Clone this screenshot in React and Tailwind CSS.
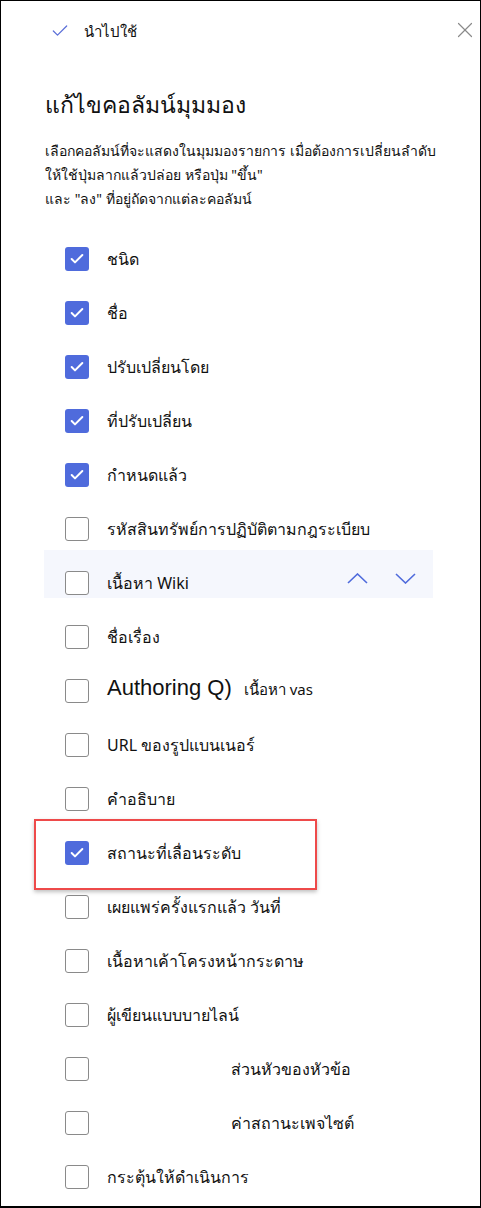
import { Check, X } from "lucide-react";

const columns = [
  { label: "ชนิด", checked: true },
  { label: "ชื่อ", checked: true },
  { label: "ปรับเปลี่ยนโดย", checked: true },
  { label: "ที่ปรับเปลี่ยน", checked: true },
  { label: "กำหนดแล้ว", checked: true },
  { label: "รหัสสินทรัพย์การปฏิบัติตามกฎระเบียบ" },
  { label: "เนื้อหา Wiki", active: true },
  { label: "ชื่อเรื่อง" },
  { label: "authoring" },
  { label: "URL ของรูปแบนเนอร์" },
  { label: "คำอธิบาย" },
  { label: "สถานะที่เลื่อนระดับ", checked: true, marked: true },
  { label: "เผยแพร่ครั้งแรกแล้ว  วันที่" },
  { label: "เนื้อหาเค้าโครงหน้ากระดาษ" },
  { label: "ผู้เขียนแบบบายไลน์" },
  { label: "ส่วนหัวของหัวข้อ", indent: true },
  { label: "ค่าสถานะเพจไซต์", indent: true },
  { label: "กระตุ้นให้ดำเนินการ" },
];

// thin chevron, wider than lucide's
const Chevron = ({ up }) => (
  <svg width="21" height="11" viewBox="0 0 21 11" fill="none" stroke="currentColor" strokeWidth="1.6">
    {up ? <polyline points="1,10 10.5,1 20,10" /> : <polyline points="1,1 10.5,10 20,1" />}
  </svg>
);

const CheckBox = ({ checked }) =>
  checked ? (
    <span className="flex items-center justify-center w-6 h-6 rounded-[3px] bg-[#4f6bdc] shrink-0">
      <Check className="w-4 h-4 text-white" strokeWidth={3} />
    </span>
  ) : (
    <span className="w-6 h-6 rounded-[3px] border border-[#8a8a8a] bg-white shrink-0" />
  );

const Label = ({ item }) => {
  if (item.label === "authoring") {
    return (
      <span className="flex items-baseline gap-3">
        <span className="text-[22px] font-['Liberation_Sans'] text-[#111] -mt-2">Authoring Q)</span>
        <span className="text-[15px]">เนื้อหา vas</span>
      </span>
    );
  }
  return <span className={item.indent ? "pl-[124px]" : ""}>{item.label}</span>;
};

const Row = ({ item }) => {
  const row = (
    <div className="flex items-center h-[54px] pl-[64px] gap-[18px] text-[16px] text-[#111]">
      <CheckBox checked={item.checked} />
      <Label item={item} />
    </div>
  );

  if (item.active) {
    return (
      <div className="relative">
        <div className="absolute left-[43px] right-[47px] top-[-6px] bottom-[12px] bg-[#f5f7fd]" />
        <div className="relative flex items-center">
          {row}
          <div className="ml-auto mr-[64px] flex items-center gap-[27px] -mt-[9px] text-[#4f6bdc]">
            <Chevron up />
            <Chevron />
          </div>
        </div>
      </div>
    );
  }

  if (item.marked) {
    return (
      <div className="relative">
        <div className="absolute left-[33px] w-[283px] top-[-7px] h-[71px] border-2 border-[#ee4a4a] shadow-[0_2px_4px_rgba(0,0,0,0.25)]" />
        {row}
      </div>
    );
  }

  return row;
};

export default function App() {
  return (
    <div className="w-[481px] h-[1208px] bg-white border border-b-2 border-black overflow-hidden font-['Tahoma','Noto_Sans','DejaVu_Sans',sans-serif]">
      <div className="flex items-center justify-between h-[60px] pl-[49px] pr-[2px]">
        <div className="flex items-center gap-[14px] text-[15px] text-[#111]">
          <Check className="w-5 h-5 text-[#5b6fd8]" strokeWidth={1.5} />
          <span>นำไปใช้</span>
        </div>
        <X className="w-[26px] h-[26px] text-[#8a8a8a] -mt-[3px]" strokeWidth={1.1} />
      </div>

      <h1 className="pl-[44px] mt-[26px] text-[23px] text-[#111]">แก้ไขคอลัมน์มุมมอง</h1>

      <p className="pl-[44px] pr-8 mt-[17px] text-[14px] leading-[24px] text-[#111]">
        เลือกคอลัมน์ที่จะแสดงในมุมมองรายการ เมื่อต้องการเปลี่ยนลำดับ
        <br />
        ให้ใช้ปุ่มลากแล้วปล่อย หรือปุ่ม "ขึ้น"
        <br />
        และ "ลง" ที่อยู่ถัดจากแต่ละคอลัมน์
      </p>

      <div className="mt-[21px]">
        {columns.map((item) => (
          <Row key={item.label} item={item} />
        ))}
      </div>
    </div>
  );
}
